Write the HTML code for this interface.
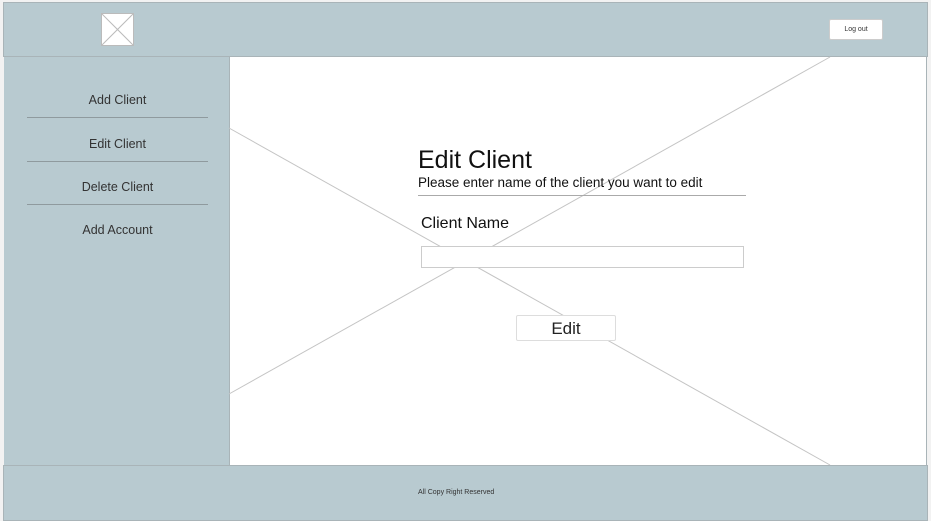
<!DOCTYPE html>
<html><head><style>
body{margin:0;width:931px;height:521px;background:#f2f2f2;position:relative;overflow:hidden;font-family:"Liberation Sans",sans-serif;}
.abs{position:absolute;}
.top{left:3px;top:2px;width:923px;height:53px;background:#b8cad0;border:1px solid #a9b4b8;}
.side{left:4px;top:57px;width:225px;height:408px;background:#b8cad0;border-right:1px solid #a9b4b8;}
.main{left:230px;top:57px;width:696px;height:408px;background:#fff;border-right:1px solid #a9b4b8;}
.foot{left:3px;top:465px;width:923px;height:54px;background:#b8cad0;border:1px solid #a9b4b8;}
.nav{position:absolute;left:23px;width:181px;text-align:center;font-size:12.5px;color:#333;}
.hr{position:absolute;left:23px;width:181px;height:1px;background:#8f9a9e;}
</style></head><body>
<div class="abs top"></div>
<svg class="abs" style="left:101px;top:13px" width="33" height="33"><rect x="0.5" y="0.5" width="32" height="32" fill="#fff" stroke="#bbb"/><line x1="1" y1="1" x2="32" y2="32" stroke="#bbb"/><line x1="32" y1="1" x2="1" y2="32" stroke="#bbb"/></svg>
<div class="abs" style="left:829px;top:19px;width:52px;height:19px;background:#fff;border:1px solid #ccc;border-radius:2px;font-size:7px;text-align:center;line-height:19px;color:#333">Log out</div>
<div class="abs side">
<div class="nav" style="top:36px">Add Client</div><div class="hr" style="top:60px"></div>
<div class="nav" style="top:80px">Edit Client</div><div class="hr" style="top:104px"></div>
<div class="nav" style="top:123px">Delete Client</div><div class="hr" style="top:147px"></div>
<div class="nav" style="top:166px">Add Account</div>
</div>
<div class="abs main"></div>
<svg class="abs" style="left:0;top:0" width="931" height="521"><line x1="229" y1="128" x2="830" y2="465" stroke="#c4c4c4"/><line x1="229" y1="394" x2="830" y2="57" stroke="#c4c4c4"/></svg>
<div class="abs" style="left:418px;top:146px;font-size:25px;color:#111">Edit Client</div>
<div class="abs" style="left:418px;top:175px;font-size:13.5px;color:#111">Please enter name of the client you want to edit</div>
<div class="abs" style="left:418px;top:195px;width:328px;height:1px;background:#aaa"></div>
<div class="abs" style="left:421px;top:215px;font-size:16px;color:#111">Client Name</div>
<div class="abs" style="left:421px;top:246px;width:321px;height:20px;background:#fff;border:1px solid #ccc"></div>
<div class="abs" style="left:516px;top:315px;width:98px;height:24px;background:#fff;border:1px solid #ddd;border-radius:2px;font-size:17px;text-align:center;line-height:25px;color:#222">Edit</div>
<div class="abs foot"></div>
<div class="abs" style="left:418px;top:489px;font-size:7px;color:#333">All Copy Right Reserved</div>
</body></html>
